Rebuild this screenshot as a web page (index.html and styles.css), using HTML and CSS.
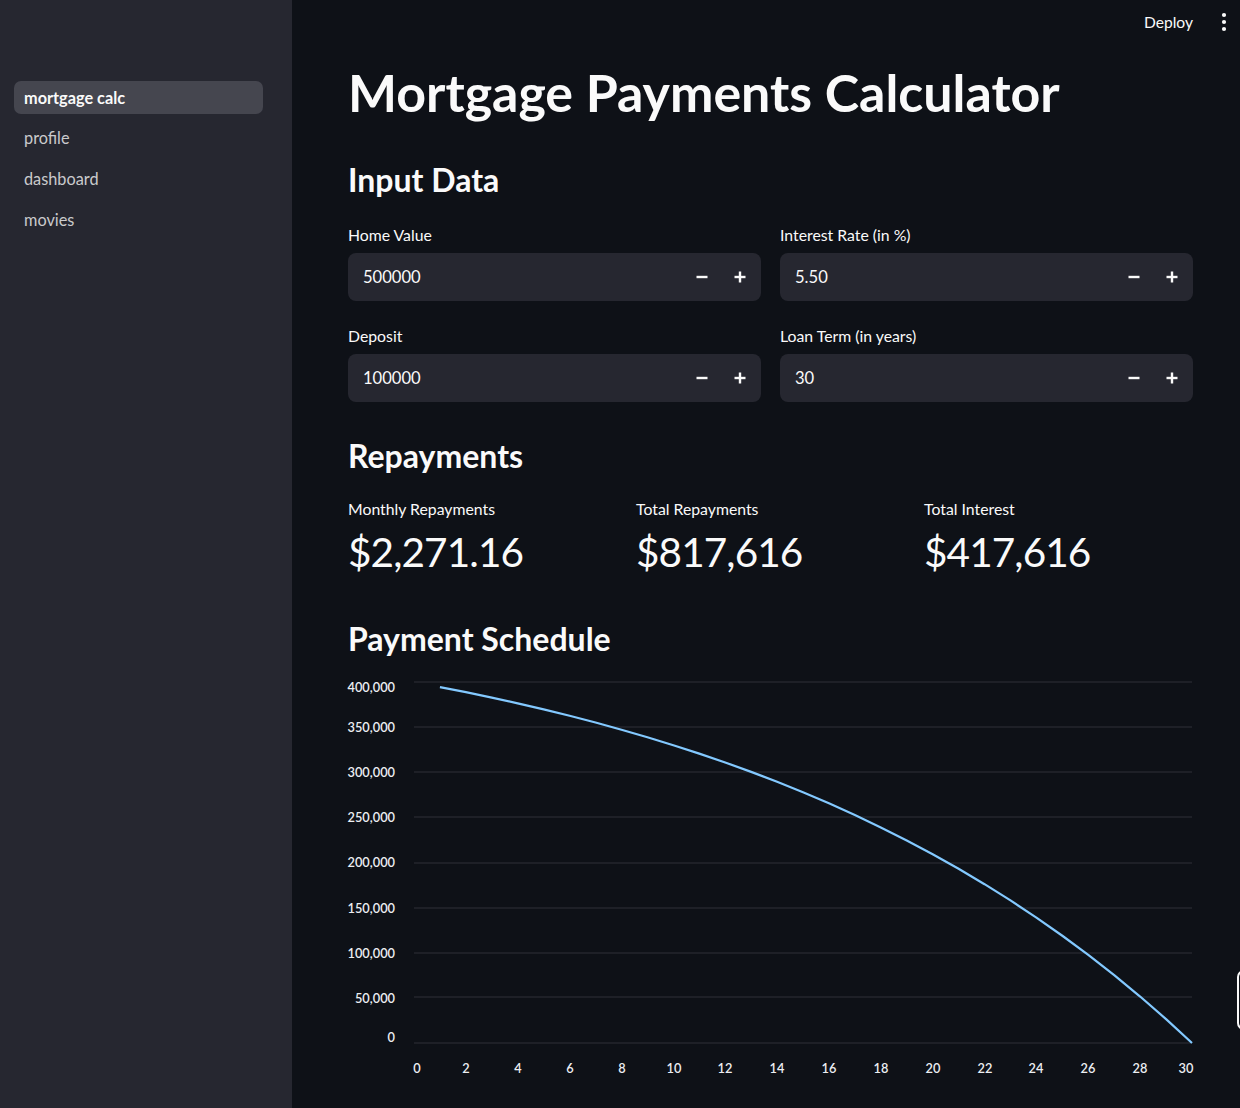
FILE: index.html
```html
<!DOCTYPE html>
<html lang="en">
<head>
<meta charset="utf-8">
<title>Mortgage Payments Calculator</title>
<link rel="stylesheet" href="styles.css">
</head>
<body>
<div class="app">
  <aside class="sidebar">
    <nav class="nav">
      <a class="nav-item active">mortgage calc</a>
      <a class="nav-item">profile</a>
      <a class="nav-item">dashboard</a>
      <a class="nav-item">movies</a>
    </nav>
  </aside>
  <main class="main">
    <header class="topbar">
      <span class="deploy">Deploy</span>
      <svg class="menu-dots" width="6" height="20" viewBox="0 0 6 20"><circle cx="3" cy="3" r="2.1" fill="#fafafa"/><circle cx="3" cy="10" r="2.1" fill="#fafafa"/><circle cx="3" cy="17" r="2.1" fill="#fafafa"/></svg>
    </header>
    <section class="content">
      <h1 class="title">Mortgage Payments Calculator</h1>
      <h3 class="subheader sub-input">Input Data</h3>
      <div class="inputs">
        <div class="field">
          <label class="field-label">Home Value</label>
          <div class="number-input"><span class="value">500000</span>
            <span class="step"><svg width="12" height="12" viewBox="0 0 12 12"><rect x="0.5" y="4.8" width="11" height="2.4" fill="#fafafa"/></svg></span>
            <span class="step"><svg width="12" height="12" viewBox="0 0 12 12"><rect x="0.5" y="4.8" width="11" height="2.4" fill="#fafafa"/><rect x="4.8" y="0.5" width="2.4" height="11" fill="#fafafa"/></svg></span>
          </div>
        </div>
        <div class="field">
          <label class="field-label">Interest Rate (in %)</label>
          <div class="number-input"><span class="value">5.50</span>
            <span class="step"><svg width="12" height="12" viewBox="0 0 12 12"><rect x="0.5" y="4.8" width="11" height="2.4" fill="#fafafa"/></svg></span>
            <span class="step"><svg width="12" height="12" viewBox="0 0 12 12"><rect x="0.5" y="4.8" width="11" height="2.4" fill="#fafafa"/><rect x="4.8" y="0.5" width="2.4" height="11" fill="#fafafa"/></svg></span>
          </div>
        </div>
        <div class="field">
          <label class="field-label">Deposit</label>
          <div class="number-input"><span class="value">100000</span>
            <span class="step"><svg width="12" height="12" viewBox="0 0 12 12"><rect x="0.5" y="4.8" width="11" height="2.4" fill="#fafafa"/></svg></span>
            <span class="step"><svg width="12" height="12" viewBox="0 0 12 12"><rect x="0.5" y="4.8" width="11" height="2.4" fill="#fafafa"/><rect x="4.8" y="0.5" width="2.4" height="11" fill="#fafafa"/></svg></span>
          </div>
        </div>
        <div class="field">
          <label class="field-label">Loan Term (in years)</label>
          <div class="number-input"><span class="value">30</span>
            <span class="step"><svg width="12" height="12" viewBox="0 0 12 12"><rect x="0.5" y="4.8" width="11" height="2.4" fill="#fafafa"/></svg></span>
            <span class="step"><svg width="12" height="12" viewBox="0 0 12 12"><rect x="0.5" y="4.8" width="11" height="2.4" fill="#fafafa"/><rect x="4.8" y="0.5" width="2.4" height="11" fill="#fafafa"/></svg></span>
          </div>
        </div>
      </div>
      <h3 class="subheader sub-repay">Repayments</h3>
      <div class="metrics">
        <div class="metric"><div class="metric-label">Monthly Repayments</div><div class="metric-value">$2,271.16</div></div>
        <div class="metric"><div class="metric-label">Total Repayments</div><div class="metric-value">$817,616</div></div>
        <div class="metric"><div class="metric-label">Total Interest</div><div class="metric-value">$417,616</div></div>
      </div>
      <h3 class="subheader sub-schedule">Payment Schedule</h3>
      <div class="chart">
        <svg class="chart-svg" width="845" height="420" viewBox="0 0 845 420">
          <g class="grid">
            <line x1="66" y1="12" x2="844" y2="12"/>
            <line x1="66" y1="57" x2="844" y2="57"/>
            <line x1="66" y1="102" x2="844" y2="102"/>
            <line x1="66" y1="147" x2="844" y2="147"/>
            <line x1="66" y1="193" x2="844" y2="193"/>
            <line x1="66" y1="238" x2="844" y2="238"/>
            <line x1="66" y1="283" x2="844" y2="283"/>
            <line x1="66" y1="327" x2="844" y2="327"/>
            <line x1="66" y1="373" x2="844" y2="373"/>
          </g>
          <g class="ylabels" text-anchor="end">
            <text x="47" y="22">400,000</text>
            <text x="47" y="62">350,000</text>
            <text x="47" y="107">300,000</text>
            <text x="47" y="152">250,000</text>
            <text x="47" y="197">200,000</text>
            <text x="47" y="243">150,000</text>
            <text x="47" y="288">100,000</text>
            <text x="47" y="333">50,000</text>
            <text x="47" y="372">0</text>
          </g>
          <g class="xlabels" text-anchor="middle">
            <text x="69" y="403">0</text>
            <text x="118" y="403">2</text>
            <text x="170" y="403">4</text>
            <text x="222" y="403">6</text>
            <text x="274" y="403">8</text>
            <text x="326" y="403">10</text>
            <text x="377" y="403">12</text>
            <text x="429" y="403">14</text>
            <text x="481" y="403">16</text>
            <text x="533" y="403">18</text>
            <text x="585" y="403">20</text>
            <text x="637" y="403">22</text>
            <text x="688" y="403">24</text>
            <text x="740" y="403">26</text>
            <text x="792" y="403">28</text>
            <text x="838" y="403">30</text>
          </g>
          <polyline class="series" points="91.93,17.06 117.87,22.2 143.8,27.62 169.73,33.35 195.67,39.4 221.6,45.8 247.53,52.55 273.47,59.69 299.4,67.23 325.33,75.19 351.27,83.61 377.2,92.49 403.13,101.88 429.07,111.8 455,122.28 480.93,133.35 506.87,145.04 532.8,157.4 558.73,170.45 584.67,184.23 610.6,198.8 636.53,214.18 662.47,230.44 688.4,247.61 714.33,265.75 740.27,284.91 766.2,305.15 792.13,326.54 818.07,349.13 844,373"/>
        </svg>
      </div>
    </section>
    <div class="edge-tab"></div>
  </main>
</div>
</body>
</html>
```

FILE: styles.css
```css
* { box-sizing: border-box; }
html, body { margin: 0; padding: 0; }
body {
  background: #0e1117;
  color: #fafafa;
  font-family: Lato, "Noto Sans", sans-serif;
  width: 1240px;
  height: 1108px;
  overflow: hidden;
}
.app { display: flex; height: 1108px; }
.sidebar {
  width: 292px;
  flex: 0 0 292px;
  background: #262730;
  padding: 81px 29px 0 14px;
}
.nav { display: flex; flex-direction: column; gap: 7.7px; }
.nav-item {
  display: flex;
  align-items: center;
  height: 33px;
  padding: 0 10px 1px;
  border-radius: 7px;
  font-size: 16.3px;
  color: rgba(250, 250, 250, 0.78);
  cursor: pointer;
}
.nav-item.active {
  background: #45464f;
  color: #fafafa;
  font-weight: 700;
}
.main { flex: 1; min-width: 0; position: relative; }
.topbar {
  height: 44px;
  display: flex;
  align-items: center;
  justify-content: flex-end;
  padding-right: 13px;
}
.deploy { font-size: 15.6px; color: #fafafa; margin-right: 28px; }
.menu-dots { display: block; }
.content { padding: 0 47px 0 56px; }
.title {
  margin: 16px 0 0;
  font-size: 51.9px;
  line-height: 64px;
  font-weight: 700;
}
.subheader {
  margin: 0;
  font-size: 32px;
  line-height: 40px;
  font-weight: 700;
}
.sub-input { margin-top: 36px; }
.inputs {
  margin-top: 23px;
  display: grid;
  grid-template-columns: 1fr 1fr;
  column-gap: 19px;
  row-gap: 23px;
}
.field-label {
  display: block;
  font-size: 15.8px;
  line-height: 24px;
  margin-bottom: 6px;
}
.number-input {
  height: 48px;
  background: #262730;
  border-radius: 8px;
  display: flex;
  align-items: center;
  padding: 0 2px 0 15px;
}
.value { flex: 1; font-size: 16.6px; }
.step {
  width: 38px;
  height: 48px;
  display: flex;
  align-items: center;
  justify-content: center;
}
.sub-repay { margin-top: 34px; }
.metrics {
  margin-top: 21px;
  display: grid;
  grid-template-columns: 1fr 1fr 1fr;
  column-gap: 19px;
}
.metric-label { font-size: 15.8px; line-height: 24px; }
.metric-value {
  margin-top: 5px;
  font-size: 40.5px;
  letter-spacing: -0.9px;
  line-height: 52px;
}
.sub-schedule { margin-top: 41px; }
.chart { margin-top: 11px; }
.chart-svg { display: block; overflow: visible; }
.grid line { stroke: #2e3038; stroke-width: 1; }
.ylabels text, .xlabels text {
  fill: #eceef2;
  font-family: Lato, "Noto Sans", sans-serif;
  font-size: 12.8px;
  font-weight: 600;
}
.series { fill: none; stroke: #83c9ff; stroke-width: 2.2; stroke-linejoin: round; }
.edge-tab {
  position: absolute;
  left: 945px;
  top: 970px;
  width: 24px;
  height: 60px;
  border: 2px solid #fafafa;
  border-radius: 7px;
  background: #0e1117;
}
```
